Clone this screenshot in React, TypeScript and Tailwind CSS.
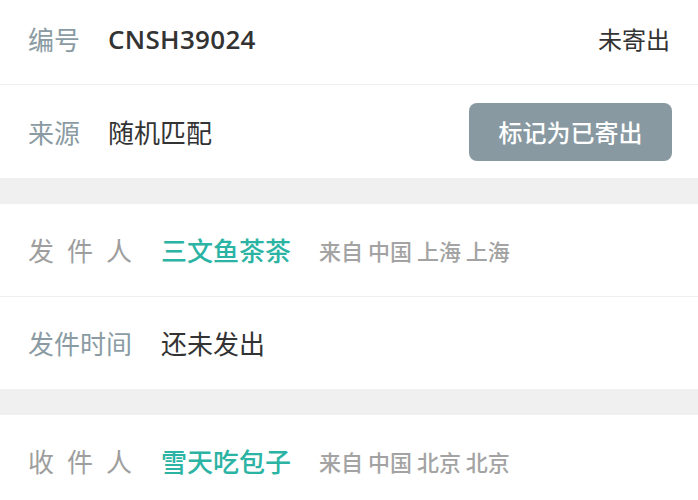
import React from "react";

const font = { fontFamily: '"Noto Sans CJK SC", "Noto Sans", sans-serif' };

const Spaced = ({ text }: { text: string }) => (
  <span className="flex w-[104px] justify-between text-[26px] leading-none text-[#9e9e9e]">
    {text.split("").map((c, i) => (
      <span key={i}>{c}</span>
    ))}
  </span>
);

const Person = ({ label, name, from }: { label: string; name: string; from: string }) => (
  <div className="flex h-[92px] items-center px-[28px]">
    <Spaced text={label} />
    <span className="ml-[29px] text-[26px] font-medium leading-none text-[#2bb3a3]">{name}</span>
    <span className="ml-[28px] text-[22px] font-medium leading-none text-[#a3a3a3]">{from}</span>
  </div>
);

export default function App() {
  return (
    <div className="w-[698px] h-[500px] overflow-hidden bg-white" style={font}>
      <div className="flex h-[85px] items-center border-b border-[#eeeeee] px-[28px] pb-[6px]">
        <span className="text-[26px] leading-none text-[#8a9ba3]">编号</span>
        <span
          className="ml-[28px] text-[26px] font-semibold leading-none tracking-[0.3px] text-[#333333]"
          style={{ fontFamily: '"Open Sans", sans-serif' }}
        >
          CNSH39024
        </span>
        <span className="ml-auto text-[24px] leading-none text-[#333333]">未寄出</span>
      </div>
      <div className="flex h-[93px] items-center px-[28px] pr-[26px]">
        <span className="text-[26px] leading-none text-[#8a9ba3]">来源</span>
        <span className="ml-[28px] text-[26px] leading-none text-[#333333]">随机匹配</span>
        <button className="ml-auto flex h-[58px] w-[203px] items-center justify-center rounded-[8px] bg-[#8899a2] text-[24px] font-medium text-white">
          标记为已寄出
        </button>
      </div>
      <div className="h-[26px] bg-[#f0f0f0]" />
      <div className="border-b border-[#eeeeee]">
        <Person label="发件人" name="三文鱼茶茶" from="来自 中国 上海 上海" />
      </div>
      <div className="flex h-[92px] items-center px-[28px]">
        <span className="text-[26px] leading-none text-[#8a9ba3]">发件时间</span>
        <span className="ml-[29px] text-[26px] leading-none text-[#333333]">还未发出</span>
      </div>
      <div className="h-[26px] bg-[#f0f0f0]" />
      <Person label="收件人" name="雪天吃包子" from="来自 中国 北京 北京" />
    </div>
  );
}
